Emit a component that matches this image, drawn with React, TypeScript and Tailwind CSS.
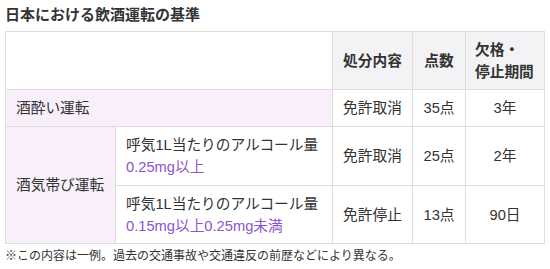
import React from "react";

const font = {
  fontFamily: '"Liberation Sans", "Noto Sans CJK JP", sans-serif',
};

export default function App() {
  const b = "border border-[#dedede] whitespace-nowrap";
  return (
    <div className="w-[550px] h-[269px] bg-white text-[#333] px-[5px] pt-[4px]" style={font}>
      <h2 className="text-[15px] leading-[22px] font-bold text-[#333]">日本における飲酒運転の基準</h2>
      <table className="mt-[5px] border-collapse w-[539px] table-fixed text-[14.7px] leading-[22px]">
        <colgroup>
          <col className="w-[110px]" />
          <col className="w-[217px]" />
          <col className="w-[80px]" />
          <col className="w-[53px]" />
          <col className="w-[79px]" />
        </colgroup>
        <tbody>
          <tr className="h-[58px]">
            <td colSpan={2} className={`${b} bg-white`}></td>
            <th className={`${b} bg-[#f3f3f5] font-bold text-center px-[6px]`}>処分内容</th>
            <th className={`${b} bg-[#f3f3f5] font-bold text-center px-[6px]`}>点数</th>
            <th className={`${b} bg-[#f3f3f5] font-bold text-left px-[9px]`}>
              欠格・
              <br />
              停止期間
            </th>
          </tr>
          <tr className="h-[37px]">
            <td colSpan={2} className={`${b} bg-[#f8effb] px-[10px]`}>酒酔い運転</td>
            <td className={`${b} text-center px-[6px]`}>免許取消</td>
            <td className={`${b} text-center`}>35点</td>
            <td className={`${b} text-center`}>3年</td>
          </tr>
          <tr className="h-[59px]">
            <td rowSpan={2} className={`${b} bg-[#f8effb] px-[10px] align-middle`}>酒気帯び運転</td>
            <td className={`${b} px-[10px]`}>
              <div>呼気1L当たりのアルコール量</div>
              <div className="text-[#8e56c9]">0.25mg以上</div>
            </td>
            <td className={`${b} text-center px-[6px]`}>免許取消</td>
            <td className={`${b} text-center`}>25点</td>
            <td className={`${b} text-center`}>2年</td>
          </tr>
          <tr className="h-[58px]">
            <td className={`${b} px-[10px]`}>
              <div>呼気1L当たりのアルコール量</div>
              <div className="text-[#8e56c9]">0.15mg以上0.25mg未満</div>
            </td>
            <td className={`${b} text-center px-[6px]`}>免許停止</td>
            <td className={`${b} text-center`}>13点</td>
            <td className={`${b} text-center`}>90日</td>
          </tr>
        </tbody>
      </table>
      <p className="mt-[3px] text-[12px] leading-[18px] text-[#333] whitespace-nowrap">
        ※この内容は一例。過去の交通事故や交通違反の前歴などにより異なる。
      </p>
    </div>
  );
}
